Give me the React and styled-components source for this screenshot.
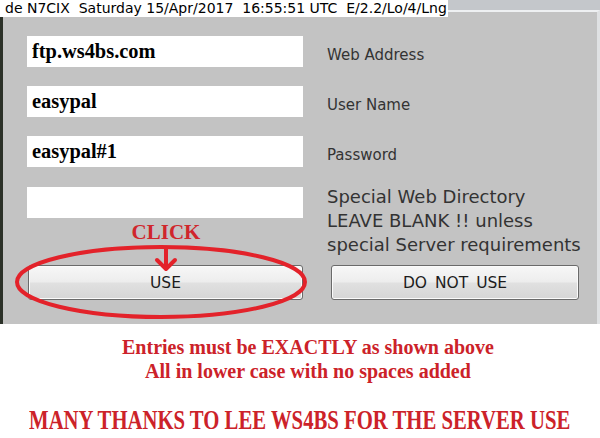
import React from 'react';
import styled, { createGlobalStyle } from 'styled-components';

const Global = createGlobalStyle`
  html, body { margin: 0; padding: 0; background: #fff; }
  body { width: 600px; height: 438px; overflow: hidden; }
`;

const Page = styled.div`
  position: relative;
  width: 600px;
  height: 438px;
  background: #fff;
  overflow: hidden;
`;

const TopStrip = styled.div`
  height: 10px;
  background: #c4c7cb;
`;

const Header = styled.div`
  position: absolute;
  top: 0;
  left: 0;
  z-index: 2;
  width: 448px;
  height: 17px;
  box-sizing: border-box;
  padding-left: 5px;
  background: #fff;
  color: #000;
  font-family: "DejaVu Sans", sans-serif;
  font-size: 14px;
  line-height: 17px;
  white-space: pre;
`;

const Panel = styled.section`
  box-sizing: border-box;
  height: 314px;
  background: #c3c3c3;
  border-top: 2px solid #eef0f2;
  border-left: 3px solid #2b3128;
  border-right: 3px solid #dfe1e3;
  padding: 24px 0 24px 24px;
  display: flex;
  flex-direction: column;
`;

const Row = styled.div`
  display: grid;
  grid-template-columns: 276px 1fr;
  column-gap: 24px;
  margin-top: ${p => p.$mt || 0}px;
  height: ${p => p.$h}px;
`;

const Field = styled.input`
  box-sizing: border-box;
  width: 276px;
  height: 31px;
  border: none;
  outline: none;
  margin: 0;
  padding: 0 0 0 5px;
  background: #fff;
  color: #000;
  font-family: "Liberation Serif", "Times New Roman", serif;
  font-weight: bold;
  font-size: 20.4px;
`;

const Label = styled.div`
  padding-top: 4px;
  color: #333;
  font-family: "DejaVu Sans", sans-serif;
  font-size: 15px;
  line-height: 31px;
`;

const Note = styled.div`
  margin-top: -2px;
  color: #333;
  font-family: "DejaVu Sans", sans-serif;
  font-size: 18px;
  line-height: 24px;
  white-space: nowrap;
`;

const Button = styled.button`
  box-sizing: border-box;
  height: 35px;
  width: ${p => p.$w}px;
  margin: 0 0 0 ${p => p.$ml || 0}px;
  padding: 0;
  border: 1px solid #6a6a6a;
  border-radius: 3px;
  background: linear-gradient(#f7f7f7 0%, #ededed 48%, #e0e0e0 52%, #d6d6d6 100%);
  box-shadow: inset 0 0 0 1px #fbfbfb;
  color: #1c1c1c;
  font-family: "DejaVu Sans", sans-serif;
  font-size: 15.5px;
  word-spacing: 3px;
  cursor: pointer;
`;

const Overlay = styled.svg`
  position: absolute;
  left: 0;
  top: 0;
  width: 600px;
  height: 438px;
  pointer-events: none;
  z-index: 3;
`;

const Click = styled.div`
  position: absolute;
  left: 116px;
  top: 222px;
  width: 100px;
  z-index: 3;
  text-align: center;
  color: #d0262c;
  font-family: "Liberation Serif", "Times New Roman", serif;
  font-weight: bold;
  font-size: 21px;
  line-height: 21px;
`;

const Notes = styled.div`
  padding-top: 11px;
  text-align: center;
  color: #cc2229;
  font-family: "Liberation Serif", "Times New Roman", serif;
  font-weight: bold;
`;

const Line = styled.div`
  padding-left: 16px;
  font-size: 20px;
  line-height: 24px;
`;

const Thanks = styled.div`
  margin-top: 21px;
  display: flex;
  justify-content: center;
  font-size: 28px;
  line-height: 32px;
  white-space: nowrap;
  span {
    flex: none;
    display: inline-block;
    transform: scaleX(0.74);
  }
`;

export default function App() {
  return (
    <Page>
      <Global />
      <Header>{'de N7CIX  Saturday 15/Apr/2017  16:55:51 UTC  E/2.2/Lo/4/Lng'}</Header>
      <TopStrip />
      <Panel>
        <Row $h={31}>
          <Field readOnly value="ftp.ws4bs.com" />
          <Label>Web Address</Label>
        </Row>
        <Row $h={31} $mt={19}>
          <Field readOnly value="easypal" />
          <Label>User Name</Label>
        </Row>
        <Row $h={31} $mt={19}>
          <Field readOnly value="easypal#1" />
          <Label>Password</Label>
        </Row>
        <Row $h={72} $mt={20}>
          <Field readOnly value="" />
          <Note>
            Special Web Directory<br />
            LEAVE BLANK !! unless<br />
            special Server requirements
          </Note>
        </Row>
        <Row $h={35} $mt={6}>
          <Button $w={275} $ml={1}>USE</Button>
          <Button $w={248} $ml={4}>DO NOT USE</Button>
        </Row>
      </Panel>
      <Notes>
        <Line>Entries must be EXACTLY as shown above</Line>
        <Line>All in lower case with no spaces added</Line>
        <Thanks><span>MANY THANKS TO LEE WS4BS FOR THE SERVER USE</span></Thanks>
      </Notes>
      <Click>CLICK</Click>
      <Overlay viewBox="0 0 600 438">
        <ellipse cx="161" cy="282" rx="144" ry="35" fill="none" stroke="#e3222a" strokeWidth="4" />
        <line x1="166" y1="247" x2="166" y2="268" stroke="#e3222a" strokeWidth="4" />
        <polyline points="157,260 166,269 175,260" fill="none" stroke="#e3222a" strokeWidth="4" strokeLinecap="round" strokeLinejoin="round" />
      </Overlay>
    </Page>
  );
}
